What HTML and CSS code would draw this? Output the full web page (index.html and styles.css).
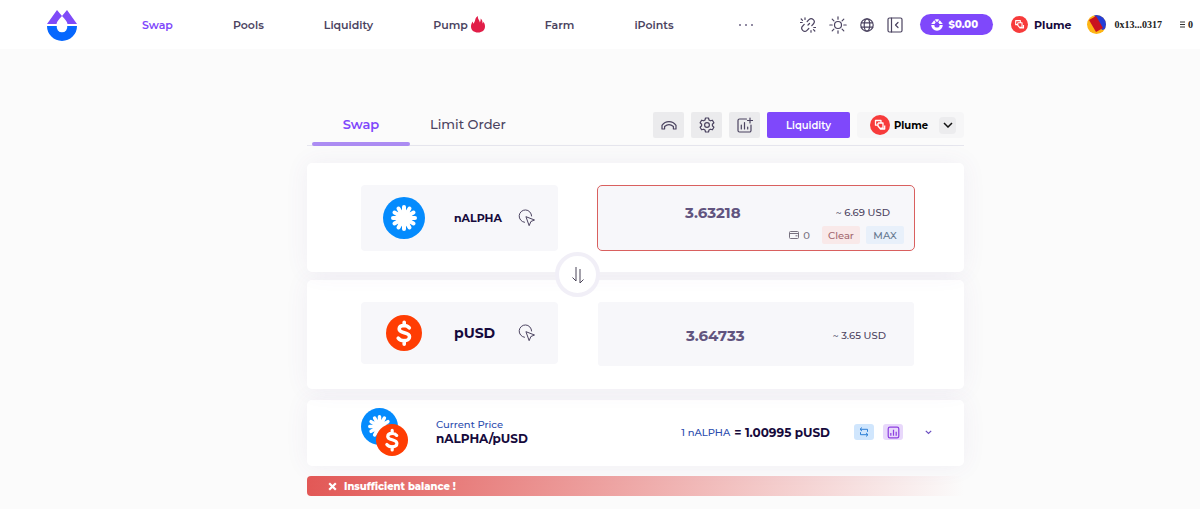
FILE: index.html
```html
<!DOCTYPE html>
<html lang="en">
<head>
    <meta charset="UTF-8">
    <meta name="viewport" content="width=device-width, initial-scale=1.0">
    <title>Swap</title>
    <link rel="stylesheet" href="styles.css">
</head>
<body>
    <svg class="sprite" aria-hidden="true">
        <symbol id="icon-plume" viewBox="0 0 20 20">
            <circle cx="10" cy="10" r="10" fill="#f73b3b"/>
            <path d="M7.500 10.200H5.500V5.500h5.500v2M8 8h5v5.200h-2.500M8 8v3l2.500 3h4.200v-3.500" fill="none" stroke="#fff" stroke-width="1.300" stroke-linejoin="round"/>
        </symbol>
        <symbol id="icon-alpha" viewBox="0 0 42 42">
            <circle cx="21" cy="21" r="21" fill="#048bfd"/>
            <circle cx="21" cy="21" r="8" fill="#fff"/>
            <g stroke="#fff" stroke-width="4" stroke-linecap="round">
                <path d="M21 10v22M10 21h22"/>
                <path d="M21 10v22M10 21h22" transform="rotate(30 21 21)"/>
                <path d="M21 10v22M10 21h22" transform="rotate(60 21 21)"/>
            </g>
        </symbol>
        <symbol id="icon-usd" viewBox="0 0 36 36">
            <circle cx="18" cy="18" r="18" fill="#ff3d03"/>
            <path d="M23.300 12.800c-1.200-1.500-3-2.300-5.200-2.300-3 0-4.900 1.300-4.900 3.500 0 4.900 10.300 2.600 10.300 7.700 0 2.500-2.200 4-5.300 4-2.600 0-4.700-.9-6-2.600M18.200 7.200v3.500M18.200 25.500v3.700" fill="none" stroke="#fff" stroke-width="3.600" stroke-linecap="round"/>
        </symbol>
        <symbol id="icon-pick" viewBox="0 0 18 18">
            <path d="M6.500 13.300A6.200 6.200 0 1 1 13.600 7M8.300 7.800l8.200 3.200-3.600 1.500-1.600 3.800z" fill="none" stroke="currentColor" stroke-linejoin="round" stroke-linecap="round"/>
        </symbol>
        <symbol id="icon-chart" viewBox="0 0 16 16">
            <rect x="1.500" y="1.500" width="13" height="13" rx="2"/>
            <path d="M4.700 8.500V12M8 4.500V12M11.300 7V12"/>
        </symbol>
    </svg>

    <header class="topbar">
        <a class="logo" href="#" aria-label="Home">
            <svg width="32" height="32" viewBox="0 0 32 32">
                <path d="M11 1 1 15h9.500c.5-2.500 2.500-5 5.500-8zM21 1l-5 6c3 3 5 5.500 5.500 8H31z" fill="#7f4af8"/>
                <path d="M1 17h9.800a5.300 5.300 0 1 0 10.400 0H31a15 15 0 0 1-30 0z" fill="#0667fe"/>
            </svg>
        </a>
        <nav class="nav">
            <a class="active" href="#">Swap</a>
            <a href="#">Pools</a>
            <a href="#">Liquidity</a>
            <a href="#">Pump
                <svg width="14" height="17" viewBox="0 0 14 17"><path d="M4.300 3.500C4.600 2 5.500.8 6.900 0 6.500 3 8.600 4 8.800 6.400 9.600 5.600 9.800 3.600 9.600 2.600c1.600 1.200 2 3 2 4.800.5-.4.7-1 .8-1.600C13.600 7.300 14 9 14 10.500c0 3.800-2.900 6-7 6s-7-2.200-7-6C0 8.600.8 7 1.800 5.600c.1 1 .3 1.700.8 2.200C3.200 6.600 4 5.300 4.300 3.500z" fill="#e11e48"/></svg>
            </a>
            <a href="#">Farm</a>
            <a href="#">iPoints</a>
            <button class="more" aria-label="More">
                <svg width="16" height="4" viewBox="0 0 16 4" fill="#6c6484"><circle cx="2" cy="2" r="1"/><circle cx="8" cy="2" r="1"/><circle cx="14" cy="2" r="1"/></svg>
            </button>
        </nav>
        <div class="tools">
            <button aria-label="Disconnect">
                <svg class="line" width="16" height="16" viewBox="0 0 16 16"><path d="M7.200 4.500 9 2.700a3 3 0 0 1 4.300 4.300l-1.500 1.600M8.800 11.500 7 13.300A3 3 0 0 1 2.700 9l1.500-1.600M9.500 6.500 8 8M5 .8v1.700M1.200 2l1.300 1.300M.5 5.500h1.700M11 13.500v1.700M13.500 12.700l1.300 1.300M13.800 10.500h1.700"/></svg>
            </button>
            <button aria-label="Theme">
                <svg class="line" width="18" height="18" viewBox="0 0 18 18"><circle cx="9" cy="9" r="3.500"/><path d="M9 .8v2.400M9 14.800v2.400M.8 9h2.400M14.800 9h2.400M3.200 3.200l1.700 1.700M13.100 13.100l1.700 1.700M14.800 3.200l-1.700 1.700M4.900 13.100l-1.700 1.700"/></svg>
            </button>
            <button aria-label="Language">
                <svg class="line" width="14" height="14" viewBox="0 0 14 14"><circle cx="7" cy="7" r="6.200"/><ellipse cx="7" cy="7" rx="2.800" ry="6.200"/><path d="M1.300 4.800h11.400M1.300 9.200h11.400"/></svg>
            </button>
            <button aria-label="Collapse panel">
                <svg class="line" width="16" height="16" viewBox="0 0 16 16"><rect x="1" y="1" width="14" height="14" rx="1.500"/><path d="M4.500 1v14M11 5.500 8.500 8l2.500 2.500"/></svg>
            </button>
        </div>
        <button class="balance">
            <svg width="12" height="12" viewBox="0 0 12 12"><path d="M.2 5 3.200 1.200 4.700 3.200 3.600 5zM11.800 5 8.800 1.200 7.300 3.200 8.400 5zM3.800.8C5 .2 7 .2 8.200.8L6 3.200zM.2 6h3.200a2.600 2.600 0 0 0 5.200 0h3.200A5.800 5.800 0 0 1 .2 6z" fill="#fff"/></svg>
            $0.00
        </button>
        <button class="network">
            <svg width="17" height="17"><use href="#icon-plume"/></svg>
            Plume
        </button>
        <button class="account">
            <svg width="19" height="19" viewBox="0 0 19 19">
                <clipPath id="avatar"><circle cx="9.500" cy="9.500" r="9.500"/></clipPath>
                <g clip-path="url(#avatar)">
                    <path d="M0 0h19v19H0z" fill="#fdb515"/>
                    <path d="M7 0h12v14l-4 1z" fill="#243ed8"/>
                    <path d="m2 5 7-4 7 12-7 4z" fill="#c9121f"/>
                </g>
            </svg>
            0x13...0317
        </button>
        <span class="pending">
            <svg width="5" height="7" viewBox="0 0 5 7"><path d="M0 1h5M0 3.500h5M0 6h5" stroke="#333"/></svg>
            0
        </span>
    </header>

    <main class="page">
        <div class="swap">
            <div class="toolbar">
                <div class="tabs" role="tablist">
                    <button class="tab active" role="tab" aria-selected="true">Swap</button>
                    <button class="tab" role="tab" aria-selected="false">Limit Order</button>
                </div>
                <div class="actions">
                    <button class="square" aria-label="Bridge">
                        <svg class="line" width="16" height="16" viewBox="0 0 16 16"><path d="M1 12V8.300C4.500 3.300 11.500 3.300 15 8.300V12h-2.600V9.500c-2.800-2.400-6-2.400-8.800 0V12z"/></svg>
                    </button>
                    <button class="square" aria-label="Settings">
                        <svg class="line" width="16" height="16" viewBox="0 0 16 16"><path d="M6.500 1h3l.5 2 1.400.8 2-.6 1.500 2.600L13.400 7.200v1.600l1.500 1.400-1.500 2.600-2-.6-1.400.8-.5 2h-3l-.5-2-1.400-.8-2 .6-1.500-2.600 1.500-1.400V7.200L1.100 5.800l1.500-2.600 2 .6L6 3z"/><circle cx="8" cy="8" r="2.400"/></svg>
                    </button>
                    <button class="square" aria-label="Add chart">
                        <svg class="line" width="16" height="16" viewBox="0 0 16 16"><path d="M9.500 2H2.500A1.500 1.500 0 0 0 1 3.500v10A1.500 1.500 0 0 0 2.500 15h10a1.500 1.500 0 0 0 1.500-1.500V8M4.300 8v4M7.500 5.500V12M10.700 10v2M13 1v5M10.500 3.500h5"/></svg>
                    </button>
                    <button class="primary">Liquidity</button>
                    <button class="chain">
                        <svg width="20" height="20"><use href="#icon-plume"/></svg>
                        Plume
                        <span class="chevron">
                            <svg width="10" height="6" viewBox="0 0 10 6"><path d="m1 1 4 4 4-4" fill="none" stroke="#111" stroke-width="1.500"/></svg>
                        </span>
                    </button>
                </div>
            </div>

            <section class="card side from">
                <button class="token">
                    <svg width="42" height="42"><use href="#icon-alpha"/></svg>
                    <span>nALPHA</span>
                    <svg class="pick" width="18" height="18"><use href="#icon-pick"/></svg>
                </button>
                <div class="amount invalid">
                    <div class="amount-row">
                        <input type="text" value="3.63218" aria-label="Amount of nALPHA">
                        <span class="usd">~ 6.69 USD</span>
                    </div>
                    <div class="amount-tools">
                        <span class="wallet">
                            <svg width="10" height="8" viewBox="0 0 10 8" fill="none" stroke="currentColor"><rect x=".5" y=".5" width="9" height="7" rx="1"/><path d="M1 2.500h8M6.500 4.800h2"/></svg>
                            0
                        </span>
                        <button class="clear">Clear</button>
                        <button class="max">MAX</button>
                    </div>
                </div>
                <button class="flip" aria-label="Switch tokens">
                    <svg width="14" height="18" viewBox="0 0 14 18"><path d="M5 1v14L1.500 11.500M9 3v14l3.500-3.500" fill="none" stroke="#4a4458"/></svg>
                </button>
            </section>

            <section class="card side to">
                <button class="token">
                    <svg width="36" height="36"><use href="#icon-usd"/></svg>
                    <span>pUSD</span>
                    <svg class="pick" width="18" height="18"><use href="#icon-pick"/></svg>
                </button>
                <div class="amount">
                    <div class="amount-row">
                        <input type="text" value="3.64733" aria-label="Amount of pUSD">
                        <span class="usd">~ 3.65 USD</span>
                    </div>
                </div>
            </section>

            <section class="card price">
                <div class="pair-icons">
                    <svg width="37" height="37"><use href="#icon-alpha"/></svg>
                    <svg class="over" width="32" height="32"><use href="#icon-usd"/></svg>
                </div>
                <div class="pair">
                    <span class="pair-label">Current Price</span>
                    <strong>nALPHA/pUSD</strong>
                </div>
                <div class="rate">
                    <span class="rate-base">1 nALPHA</span>
                    <strong>= 1.00995 pUSD</strong>
                </div>
                <button class="chip blue" aria-label="Invert price">
                    <svg width="10" height="10" viewBox="0 0 10 10"><path d="M3 .5 1 2.300l2 1.800M1 2.300h7.500v2.500M7 5.900l2 1.800-2 1.800M9 7.700H1.500V5.200" fill="none" stroke="currentColor"/></svg>
                </button>
                <button class="chip purple" aria-label="Price chart">
                    <svg width="13" height="13" fill="none" stroke="currentColor" stroke-width="1.500"><use href="#icon-chart"/></svg>
                </button>
                <button class="expand" aria-label="Details">
                    <svg width="7" height="5" viewBox="0 0 7 5"><path d="m.8.8 2.700 2.700L6.200.8" fill="none" stroke="currentColor" stroke-width="1.200"/></svg>
                </button>
            </section>

            <div class="alert" role="alert">
                <svg width="9" height="9" viewBox="0 0 9 9"><path d="m1.200 1.200 6.600 6.600M7.800 1.200 1.200 7.800" stroke="#fff" stroke-width="2.200"/></svg>
                Insufficient balance !
            </div>
        </div>
    </main>
</body>
</html>
```
FILE: styles.css
```css
:root {
    --purple: #7f48fb;
    --ink: #160a3c;
    --text: #4b4360;
    --field: #f7f7fa;
    --danger: #d9605f;
}

* {
    margin: 0;
    padding: 0;
    box-sizing: border-box;
}

body {
    font-family: Montserrat, Inter, sans-serif;
    font-size: 11px;
    color: var(--text);
    background-color: #fbfbfb;
    min-height: 100vh;
}

a {
    color: inherit;
    text-decoration: none;
}

button {
    font: inherit;
    color: inherit;
    background: none;
    border: none;
    cursor: pointer;
}

svg {
    display: block;
    flex: none;
}

.sprite {
    position: absolute;
    width: 0;
    height: 0;
}

.line {
    fill: none;
    stroke: #4b4360;
    stroke-width: 1.2;
    stroke-linecap: round;
    stroke-linejoin: round;
}

/* Top bar */
.topbar {
    display: flex;
    align-items: center;
    height: 49px;
    padding: 0 7px 0 46px;
    background-color: #fff;
    white-space: nowrap;
}

.nav {
    display: flex;
    align-items: center;
    flex: 1;
    gap: 60px;
    margin-left: 64px;
    font-weight: 600;
}

.nav a {
    display: flex;
    align-items: center;
    gap: 3px;
}

.nav .active {
    color: var(--purple);
}

.nav .more {
    margin-left: 4px;
}

.tools {
    display: flex;
    align-items: center;
    gap: 13px;
}

.balance {
    display: flex;
    align-items: center;
    gap: 5px;
    height: 21px;
    margin-left: 17px;
    padding: 0 15px 0 11px;
    border-radius: 11px;
    color: #fff;
    font-size: 10px;
    font-weight: 800;
    background-color: var(--purple);
}

.network {
    display: flex;
    align-items: center;
    gap: 6px;
    margin-left: 18px;
    color: var(--ink);
    font-size: 11px;
    font-weight: 700;
}

.account {
    display: flex;
    align-items: center;
    gap: 9px;
    margin-left: 15px;
}

.account,
.pending {
    color: #222;
    font-family: "Liberation Serif", serif;
    font-size: 10px;
    font-weight: 700;
}

.pending {
    display: flex;
    align-items: center;
    gap: 3px;
    margin-left: 18px;
}

/* Swap panel */
.page {
    padding: 56px 0 12px 71px;
}

.swap {
    max-width: 657px;
    margin: 0 auto;
}

.toolbar {
    display: flex;
    justify-content: space-between;
    height: 41px;
    margin-bottom: 17px;
    padding-left: 5px;
    border-bottom: 1px solid #e6e6ee;
}

.tabs {
    display: flex;
}

.tab {
    height: 41px;
    padding: 0 20px;
    border-bottom: 4px solid transparent;
    font-size: 13px;
    font-weight: 500;
}

.tab.active {
    position: relative;
    width: 98px;
    color: var(--purple);
    font-weight: 600;
}

.tab.active::after {
    content: "";
    position: absolute;
    left: 0;
    right: 0;
    bottom: -4px;
    height: 4px;
    border-radius: 2px;
    background-color: #ac8cf3;
}

.actions {
    display: flex;
    gap: 7px;
    height: 26px;
    margin-top: 7px;
}

.square {
    display: grid;
    place-items: center;
    width: 31px;
    border-radius: 2px;
    background-color: #ebebed;
}

.primary {
    width: 83px;
    border-radius: 2px;
    color: #fff;
    font-size: 10px;
    font-weight: 600;
    background-color: var(--purple);
}

.chain {
    display: flex;
    align-items: center;
    gap: 4px;
    width: 107px;
    padding: 0 8px 0 13px;
    border-radius: 4px;
    color: #000;
    font-size: 10px;
    font-weight: 700;
    background-color: #f6f6f7;
}

.chevron {
    display: grid;
    place-items: center;
    width: 17px;
    height: 17px;
    margin-left: auto;
    border-radius: 4px;
    background-color: #ececee;
}

.card {
    border-radius: 5px;
    background-color: #fff;
    box-shadow: 0 0 24px rgba(100, 70, 150, 0.07);
}

.side {
    position: relative;
    display: grid;
    grid-template-columns: 197px 1fr;
    align-items: start;
    gap: 39px;
    padding: 22px 49px 21px 54px;
}

.from {
    z-index: 1;
    margin-bottom: 8px;
}

.to {
    margin-bottom: 11px;
    padding-right: 50px;
    padding-bottom: 23px;
    gap: 40px;
}

.token {
    display: grid;
    grid-template-columns: 42px 1fr 18px;
    align-items: center;
    justify-items: center;
    gap: 12px;
    height: 66px;
    padding: 0 22px;
    border-radius: 4px;
    color: var(--ink);
    font-size: 11px;
    font-weight: 700;
    background-color: var(--field);
}

.token span {
    justify-self: start;
    margin-left: 17px;
}

.token .pick {
    color: #4b4360;
}

.to .token {
    height: 62px;
    font-size: 14px;
}

.amount {
    display: flex;
    flex-direction: column;
    justify-content: center;
    height: 64px;
    padding: 2px 28px 0;
    border-radius: 3px;
    background-color: var(--field);
}

.amount.invalid {
    height: 66px;
    padding: 10px 10px 0 20px;
    justify-content: flex-end;
    border: 1px solid var(--danger);
    border-radius: 5px;
}

.amount-row {
    display: flex;
    align-items: center;
    gap: 28px;
}

.invalid .amount-row {
    padding-right: 14px;
}

.amount input {
    flex: 1;
    min-width: 0;
    height: 24px;
    border: none;
    outline: none;
    color: #61547f;
    font: inherit;
    font-size: 15px;
    font-weight: 700;
    text-align: center;
    background: none;
}

.usd {
    font-size: 10px;
    font-weight: 500;
}

.amount-tools {
    display: flex;
    align-items: center;
    justify-content: flex-end;
    gap: 6px;
    padding: 2px 0 6px;
    color: #77717f;
    font-size: 10px;
    font-weight: 500;
}

.wallet {
    display: flex;
    align-items: center;
    gap: 4px;
    margin-right: 6px;
}

.clear,
.max {
    width: 38px;
    height: 18px;
    border-radius: 2px;
}

.clear {
    color: #a2676e;
    background-color: #f9e9e9;
}

.max {
    color: #66788f;
    background-color: #e8f0fa;
}

.flip {
    position: absolute;
    left: 248px;
    bottom: -25px;
    display: grid;
    place-items: center;
    width: 45px;
    height: 45px;
    border: 4px solid #f1eff7;
    border-radius: 50%;
    background-color: #fff;
}

/* Price summary */
.price {
    display: flex;
    align-items: center;
    height: 66px;
    padding: 0 32px 2px 54px;
    color: var(--ink);
}

.pair-icons {
    position: relative;
    width: 47px;
    height: 48px;
}

.pair-icons .over {
    position: absolute;
    right: 0;
    bottom: 0;
}

.pair {
    display: flex;
    flex-direction: column;
    flex: 1;
    margin-left: 28px;
    line-height: 14px;
}

.pair strong,
.rate strong {
    font-size: 12px;
    font-weight: 700;
}

.pair-label,
.rate-base {
    color: #2c4cae;
    font-size: 10px;
    font-weight: 500;
}

.rate {
    display: flex;
    align-items: center;
    gap: 4px;
    margin-right: 24px;
}

.chip {
    display: grid;
    place-items: center;
    width: 20px;
    height: 16px;
    margin-right: 9px;
    border-radius: 3px;
}

.blue {
    color: #2d7fd6;
    background-color: #d0e6fd;
}

.purple {
    color: #8d3fe0;
    background-color: #e8d8fb;
}

.expand {
    margin-left: 13px;
    color: #6b4fc0;
}

.alert {
    display: flex;
    align-items: center;
    gap: 7px;
    height: 20px;
    margin-top: 10px;
    padding: 0 21px;
    border-radius: 4px;
    color: #fff;
    font-size: 10px;
    font-weight: 800;
    background: linear-gradient(to right, #e25856, rgba(226, 88, 86, 0));
}
```
